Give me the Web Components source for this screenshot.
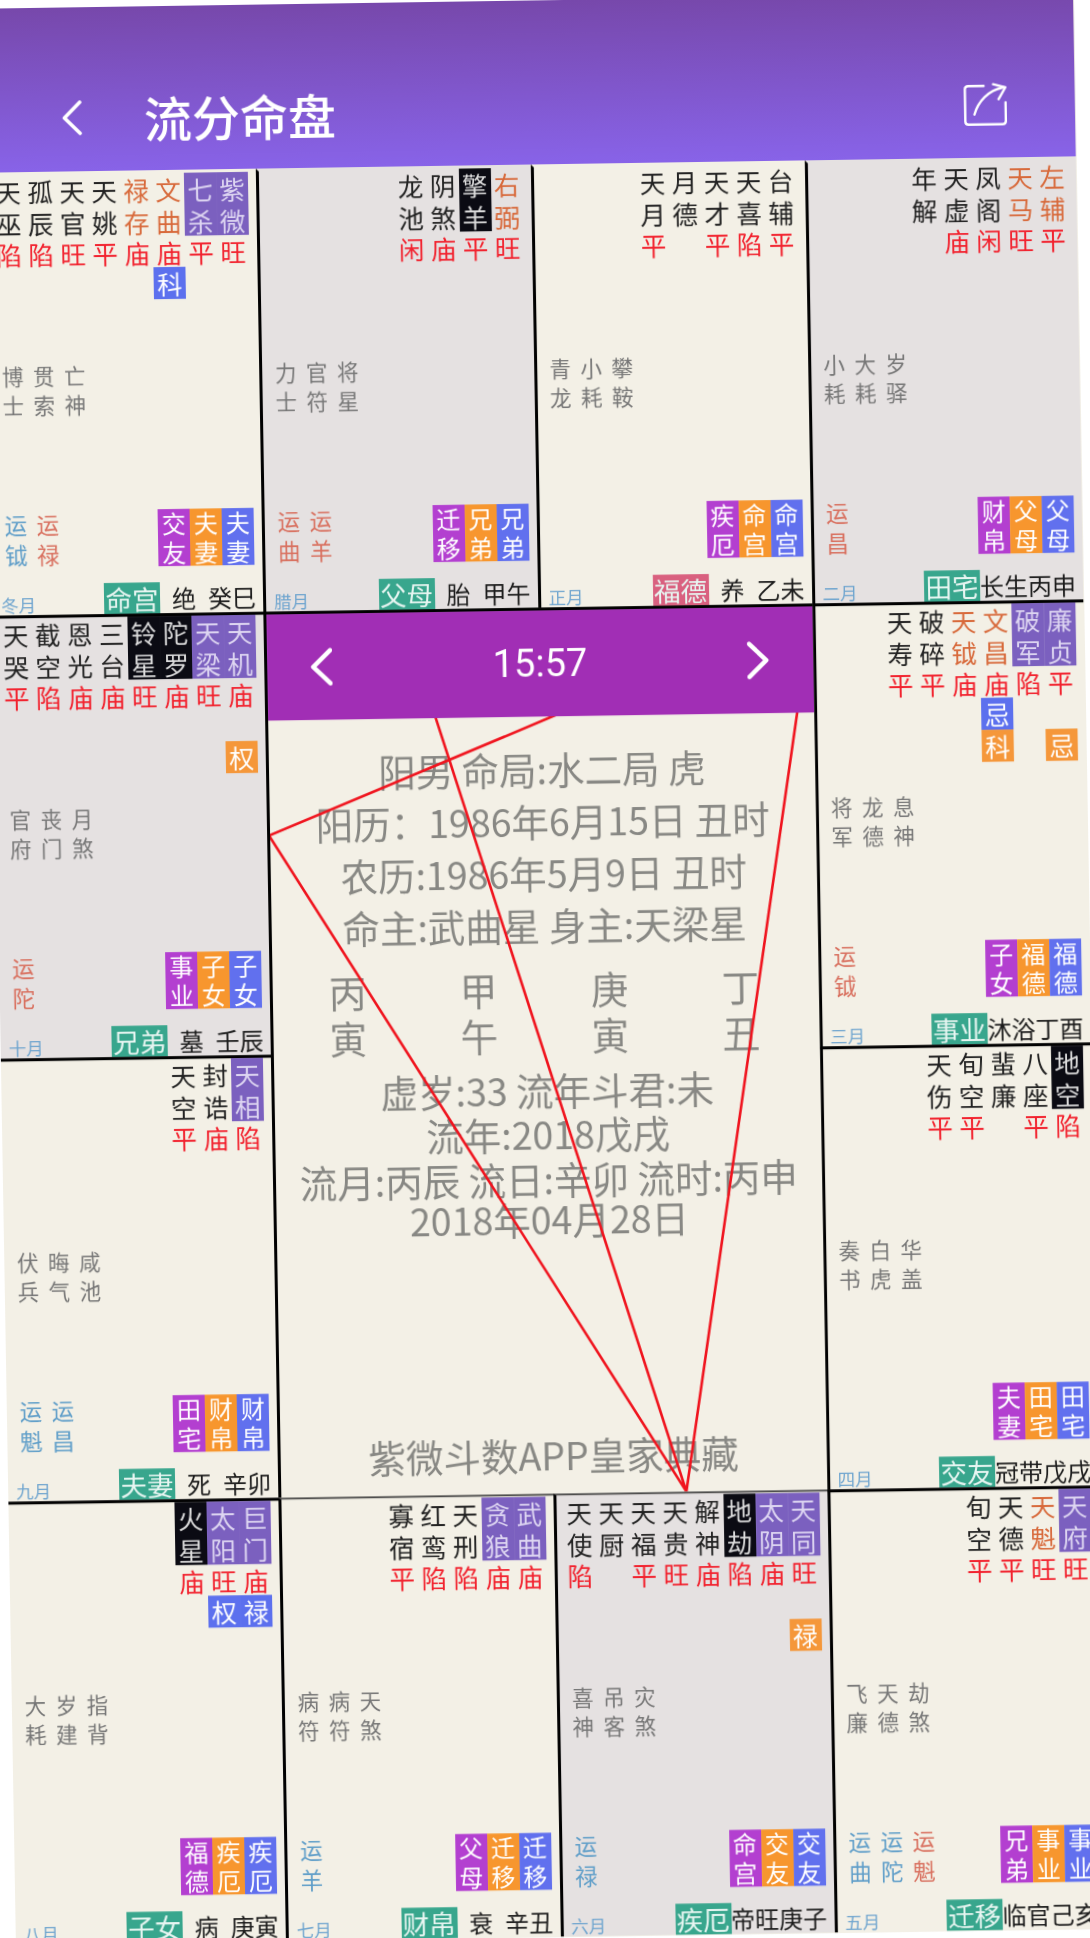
<!DOCTYPE html>
<html lang="zh-CN">
<head>
<meta charset="utf-8">
<title>流分命盘</title>
<style>
html,body{margin:0;padding:0;background:#fff;overflow:hidden;width:1090px;height:1938px}
body{font-family:"Noto Sans CJK SC","Noto Sans",sans-serif}
</style>
</head>
<body>
<template id="t-app">
  <style>
    :host{display:block;width:1090px;height:1936px;background:#f3f0e6;transform-origin:0 0;transform:matrix(1,-0.015,0.017,1,-17,8.7);filter:blur(.35px)}
    .grid{display:grid;grid-template-columns:270px 274.5px 274px 271.5px;grid-template-rows:repeat(4,443px)}
  </style>
  <slot name="header"></slot>
  <div class="grid"><slot></slot></div>
</template>

<template id="t-header">
  <style>
    :host{display:flex;align-items:center;height:164px;box-sizing:border-box;padding:56px 68px 0 77px;background:linear-gradient(180deg,#7748ab 0%,#8863e8 100%);color:#fff}
    .title{font-size:48px;font-weight:500;line-height:60px;margin-left:62px;flex:1}
    svg{display:block}
  </style>
  <svg width="20" height="35" viewBox="0 0 20 35" fill="none" stroke="#fff" stroke-width="3.6" stroke-linecap="round" stroke-linejoin="round"><path d="M18 2 2.5 17.5 18 33"/></svg>
  <div class="title"><slot></slot></div>
  <svg width="43" height="43" viewBox="0 0 43 43" fill="none" stroke="#fff" stroke-width="2.4" stroke-linecap="round" stroke-linejoin="round"><path d="M20 3.3H4.5Q1.2 3.3 1.2 6.6V38.4Q1.2 41.7 4.5 41.7H38.4Q41.7 41.7 41.7 38.4V20"/><path d="M10.4 31.7C14 19 25 7 40 5"/><path d="M29.5 1.7 41.7 5 34.8 16.7"/></svg>
</template>

<template id="t-cell">
  <style>
    :host{display:flex;flex-direction:column;box-sizing:border-box;height:443px;min-width:0;background:#f3f0e6;border-top:3px solid #000;border-left:3px solid #000;padding:0 8px 0 8px}
    :host([tone="gray"]){background:#e5e1e1}
    :host([row="1"]){border-top-color:transparent}
    :host([col="1"]){border-left:0}
    :host([thin]){border-top:2px solid #4a4a4a;padding-top:1px}
    .stars{display:flex;justify-content:flex-end;height:187px}
    .mid{display:flex;height:57px;font-size:21.5px;line-height:28.5px;color:#777}
    .mid span{display:block;width:31px;padding:0 4.75px;box-sizing:border-box}
    .mid b{display:block;width:1em;font-weight:400}
    .luckrow{display:flex;justify-content:space-between;margin-top:92px;height:57px}
    .luck{display:flex;margin-top:-2px}
    .tags{display:flex;font-size:24px;line-height:28.5px;color:#fff}
    .tag{width:32px;height:57px}
    .tag b{display:block;font-weight:400;width:1em;margin:0 auto}
    .t1{background:#b33fd0}.t2{background:#f7962e}.t3{background:#6170ee}
    .bottom{display:flex;align-items:flex-end;height:47px;color:#1c1c1c;font-size:24px;line-height:31px;white-space:nowrap}
    .month{font-size:17.5px;line-height:21px;color:#6fa5cf;margin-right:auto}
    .pal{width:56px;height:31px;text-align:center;background:#38a68d;color:#e8f6f2;font-size:26.5px;line-height:31px}
    .pal.hot{background:#d9607f}
    .stage{width:48px;text-align:center}
    .gz{width:47px;text-align:center}
  </style>
  <div class="stars"><slot></slot></div>
  <div class="mid"></div>
  <div class="luckrow"><div class="luck"><slot name="luck"></slot></div><div class="tags"></div></div>
  <div class="bottom"><span class="month"></span><span class="pal"></span><span class="stage"></span><span class="gz"></span></div>
</template>

<template id="t-star">
  <style>
    :host{display:block;width:32px;font-size:25.5px;color:#222;flex:none}
    .n{height:63px;line-height:31.5px}
    .n b,.b b,.h b{display:block;width:1em;margin:0 auto;font-weight:400}
    .b{height:31px;line-height:31px;color:#f2222e}
    .h{height:32px;line-height:32px;color:#fff;font-size:25px}
    .n.o{color:#d8693a}
    .n.p{background:#7b60bf;color:#ded6f2}
    .n.k{background:#0b0b13;color:#ddd}
    .h.blue{background:#5c70ee}
    .h.orange{background:#f5973a}
  </style>
  <div class="n"><b></b></div>
  <div class="b"><b></b></div>
  <div class="h hb"><b></b></div>
  <div class="h ho"><b></b></div>
</template>

<template id="t-luck">
  <style>
    :host{display:block;width:32px;font-size:22.5px;line-height:30px;color:#5f9ec9;flex:none}
    :host([c="r"]){color:#d9705f}
    b{display:block;width:1em;margin:0 auto;font-weight:400}
  </style>
  <b><slot></slot></b>
</template>

<template id="t-center">
  <style>
    :host{grid-column:2 / span 2;grid-row:2 / span 2;display:flex;flex-direction:column;position:relative;box-sizing:border-box;background:#f3f0e6;border-top:3px solid #000;border-left:3px solid #000;color:#888884;text-align:center;font-size:37.5px;overflow:hidden}
    .bar{display:flex;align-items:center;justify-content:space-between;height:106px;padding:0 43px;background:#a12eb5;color:#fff;flex:none;position:relative;z-index:1}
    .time{font-family:Roboto,"Liberation Sans",sans-serif;font-weight:400;font-size:38px}
    svg.tri{position:absolute;left:-3px;top:-3px;width:551.5px;height:886px}
    svg.chev{display:block}
    .body{display:flex;flex-direction:column;flex:1;padding:26px 0 14px;white-space:nowrap}
    .a{line-height:52px}
    .p{display:grid;grid-template-columns:repeat(4,131px);justify-content:center;line-height:46px;margin-top:15px;margin-left:-3px}
    .c{line-height:44.5px}
    .f{margin-top:auto;line-height:50px}
  </style>
  <div class="bar">
    <svg class="chev" width="22" height="38" viewBox="0 0 22 38" fill="none" stroke="#fff" stroke-width="4.5" stroke-linecap="round" stroke-linejoin="round"><path d="M20 2.5 3 19 20 35.5"/></svg>
    <span class="time">15:57</span>
    <svg class="chev" width="22" height="38" viewBox="0 0 22 38" fill="none" stroke="#fff" stroke-width="4.5" stroke-linecap="round" stroke-linejoin="round"><path d="M2 2.5 19 19 2 35.5"/></svg>
  </div>
  <svg class="tri" viewBox="0 0 551.5 886" fill="none" stroke="#f0141e" stroke-width="2.6"><path d="M408 886 2 224 292.5 107M408 886 170 107M408 886 532.5 106"/></svg>
  <div class="body">
    <div class="a">阳男 命局:水二局 虎</div>
    <div class="a">阳历：1986年6月15日 丑时</div>
    <div class="a">农历:1986年5月9日 丑时</div>
    <div class="a">命主:武曲星 身主:天梁星</div>
    <div class="p"><span>丙</span><span>甲</span><span>庚</span><span>丁</span><span>寅</span><span>午</span><span>寅</span><span>丑</span></div>
    <div class="c" style="margin-top:9.5px">虚岁:33 流年斗君:未</div>
    <div class="c">流年:2018戊戌</div>
    <div class="c">流月:丙辰 流日:辛卯 流时:丙申</div>
    <div class="c" style="margin-top:-4px">2018年04月28日</div>
    <div class="f">紫微斗数APP皇家典藏</div>
  </div>
</template>

<script>
function mount(el,id){
  const r=el.attachShadow({mode:"open"});
  r.appendChild(document.getElementById(id).content.cloneNode(true));
  return r;
}
customElements.define("zw-app",class extends HTMLElement{constructor(){super();mount(this,"t-app")}});
customElements.define("zw-header",class extends HTMLElement{constructor(){super();mount(this,"t-header")}});
customElements.define("zw-center",class extends HTMLElement{constructor(){super();mount(this,"t-center")}});
customElements.define("zw-luck",class extends HTMLElement{constructor(){super();mount(this,"t-luck")}});
customElements.define("zw-star",class extends HTMLElement{
  connectedCallback(){
    if(this.shadowRoot)return;
    const r=mount(this,"t-star"),g=a=>this.getAttribute(a)||"";
    const n=r.querySelector(".n");n.firstElementChild.textContent=g("n");if(g("k"))n.classList.add(g("k"));
    r.querySelector(".b b").textContent=g("b");
    const hb=r.querySelector(".hb"),ho=r.querySelector(".ho");
    if(g("hb")){hb.firstElementChild.textContent=g("hb");hb.classList.add("blue")}
    if(g("ho")){ho.firstElementChild.textContent=g("ho");ho.classList.add("orange")}
  }
});
customElements.define("zw-cell",class extends HTMLElement{
  connectedCallback(){
    if(this.shadowRoot)return;
    const r=mount(this,"t-cell"),g=a=>this.getAttribute(a)||"";
    const mid=r.querySelector(".mid");
    g("mid").split(",").forEach(s=>{const sp=document.createElement("span"),b=document.createElement("b");b.textContent=s;sp.appendChild(b);mid.appendChild(sp)});
    const tags=r.querySelector(".tags");
    g("tags").split(",").forEach((s,i)=>{const d=document.createElement("div"),b=document.createElement("b");d.className="tag t"+(i+1);b.textContent=s;d.appendChild(b);tags.appendChild(d)});
    r.querySelector(".month").textContent=g("month");
    const p=r.querySelector(".pal");p.textContent=g("pal");if(this.hasAttribute("hot"))p.classList.add("hot");
    r.querySelector(".stage").textContent=g("stage");
    r.querySelector(".gz").textContent=g("gz");
  }
});
</script>

<zw-app>
  <zw-header slot="header">流分命盘</zw-header>

  <zw-cell row="1" col="1" mid="博士,贯索,亡神" tags="交友,夫妻,夫妻" month="冬月" pal="命宫" stage="绝" gz="癸巳">
    <zw-star n="天巫" b="陷"></zw-star><zw-star n="孤辰" b="陷"></zw-star><zw-star n="天官" b="旺"></zw-star><zw-star n="天姚" b="平"></zw-star><zw-star n="禄存" b="庙" k="o"></zw-star><zw-star n="文曲" b="庙" k="o" hb="科"></zw-star><zw-star n="七杀" b="平" k="p"></zw-star><zw-star n="紫微" b="旺" k="p"></zw-star>
    <zw-luck slot="luck">运钺</zw-luck><zw-luck slot="luck" c="r">运禄</zw-luck>
  </zw-cell>
  <zw-cell row="1" tone="gray" mid="力士,官符,将星" tags="迁移,兄弟,兄弟" month="腊月" pal="父母" stage="胎" gz="甲午">
    <zw-star n="龙池" b="闲"></zw-star><zw-star n="阴煞" b="庙"></zw-star><zw-star n="擎羊" b="平" k="k"></zw-star><zw-star n="右弼" b="旺" k="o"></zw-star>
    <zw-luck slot="luck" c="r">运曲</zw-luck><zw-luck slot="luck" c="r">运羊</zw-luck>
  </zw-cell>
  <zw-cell row="1" mid="青龙,小耗,攀鞍" tags="疾厄,命宫,命宫" month="正月" pal="福德" hot stage="养" gz="乙未">
    <zw-star n="天月" b="平"></zw-star><zw-star n="月德"></zw-star><zw-star n="天才" b="平"></zw-star><zw-star n="天喜" b="陷"></zw-star><zw-star n="台辅" b="平"></zw-star>
  </zw-cell>
  <zw-cell row="1" tone="gray" mid="小耗,大耗,岁驿" tags="财帛,父母,父母" month="二月" pal="田宅" stage="长生" gz="丙申">
    <zw-star n="年解"></zw-star><zw-star n="天虚" b="庙"></zw-star><zw-star n="凤阁" b="闲"></zw-star><zw-star n="天马" b="旺" k="o"></zw-star><zw-star n="左辅" b="平" k="o"></zw-star>
    <zw-luck slot="luck" c="r">运昌</zw-luck>
  </zw-cell>

  <zw-cell col="1" tone="gray" mid="官府,丧门,月煞" tags="事业,子女,子女" month="十月" pal="兄弟" stage="墓" gz="壬辰">
    <zw-star n="天哭" b="平"></zw-star><zw-star n="截空" b="陷"></zw-star><zw-star n="恩光" b="庙"></zw-star><zw-star n="三台" b="庙"></zw-star><zw-star n="铃星" b="旺" k="k"></zw-star><zw-star n="陀罗" b="庙" k="k"></zw-star><zw-star n="天梁" b="旺" k="p"></zw-star><zw-star n="天机" b="庙" k="p" ho="权"></zw-star>
    <zw-luck slot="luck" c="r">运陀</zw-luck>
  </zw-cell>
  <zw-center></zw-center>
  <zw-cell mid="将军,龙德,息神" tags="子女,福德,福德" month="三月" pal="事业" stage="沐浴" gz="丁酉">
    <zw-star n="天寿" b="平"></zw-star><zw-star n="破碎" b="平"></zw-star><zw-star n="天钺" b="庙" k="o"></zw-star><zw-star n="文昌" b="庙" k="o" hb="忌" ho="科"></zw-star><zw-star n="破军" b="陷" k="p"></zw-star><zw-star n="廉贞" b="平" k="p" ho="忌"></zw-star>
    <zw-luck slot="luck" c="r">运钺</zw-luck>
  </zw-cell>

  <zw-cell col="1" mid="伏兵,晦气,咸池" tags="田宅,财帛,财帛" month="九月" pal="夫妻" stage="死" gz="辛卯">
    <zw-star n="天空" b="平"></zw-star><zw-star n="封诰" b="庙"></zw-star><zw-star n="天相" b="陷" k="p"></zw-star>
    <zw-luck slot="luck">运魁</zw-luck><zw-luck slot="luck">运昌</zw-luck>
  </zw-cell>
  <zw-cell mid="奏书,白虎,华盖" tags="夫妻,田宅,田宅" month="四月" pal="交友" stage="冠带" gz="戊戌">
    <zw-star n="天伤" b="平"></zw-star><zw-star n="旬空" b="平"></zw-star><zw-star n="蜚廉"></zw-star><zw-star n="八座" b="平"></zw-star><zw-star n="地空" b="陷" k="k"></zw-star>
  </zw-cell>

  <zw-cell col="1" mid="大耗,岁建,指背" tags="福德,疾厄,疾厄" month="八月" pal="子女" stage="病" gz="庚寅">
    <zw-star n="火星" b="庙" k="k"></zw-star><zw-star n="太阳" b="旺" k="p" hb="权"></zw-star><zw-star n="巨门" b="庙" k="p" hb="禄"></zw-star>
  </zw-cell>
  <zw-cell thin mid="病符,病符,天煞" tags="父母,迁移,迁移" month="七月" pal="财帛" stage="衰" gz="辛丑">
    <zw-star n="寡宿" b="平"></zw-star><zw-star n="红鸾" b="陷"></zw-star><zw-star n="天刑" b="陷"></zw-star><zw-star n="贪狼" b="庙" k="p"></zw-star><zw-star n="武曲" b="庙" k="p"></zw-star>
    <zw-luck slot="luck">运羊</zw-luck>
  </zw-cell>
  <zw-cell thin tone="gray" mid="喜神,吊客,灾煞" tags="命宫,交友,交友" month="六月" pal="疾厄" stage="帝旺" gz="庚子">
    <zw-star n="天使" b="陷"></zw-star><zw-star n="天厨"></zw-star><zw-star n="天福" b="平"></zw-star><zw-star n="天贵" b="旺"></zw-star><zw-star n="解神" b="庙"></zw-star><zw-star n="地劫" b="陷" k="k"></zw-star><zw-star n="太阴" b="庙" k="p"></zw-star><zw-star n="天同" b="旺" k="p" ho="禄"></zw-star>
    <zw-luck slot="luck">运禄</zw-luck>
  </zw-cell>
  <zw-cell mid="飞廉,天德,劫煞" tags="兄弟,事业,事业" month="五月" pal="迁移" stage="临官" gz="己亥">
    <zw-star n="旬空" b="平"></zw-star><zw-star n="天德" b="平"></zw-star><zw-star n="天魁" b="旺" k="o"></zw-star><zw-star n="天府" b="旺" k="p"></zw-star>
    <zw-luck slot="luck">运曲</zw-luck><zw-luck slot="luck">运陀</zw-luck><zw-luck slot="luck" c="r">运魁</zw-luck>
  </zw-cell>
</zw-app>
</body>
</html>
